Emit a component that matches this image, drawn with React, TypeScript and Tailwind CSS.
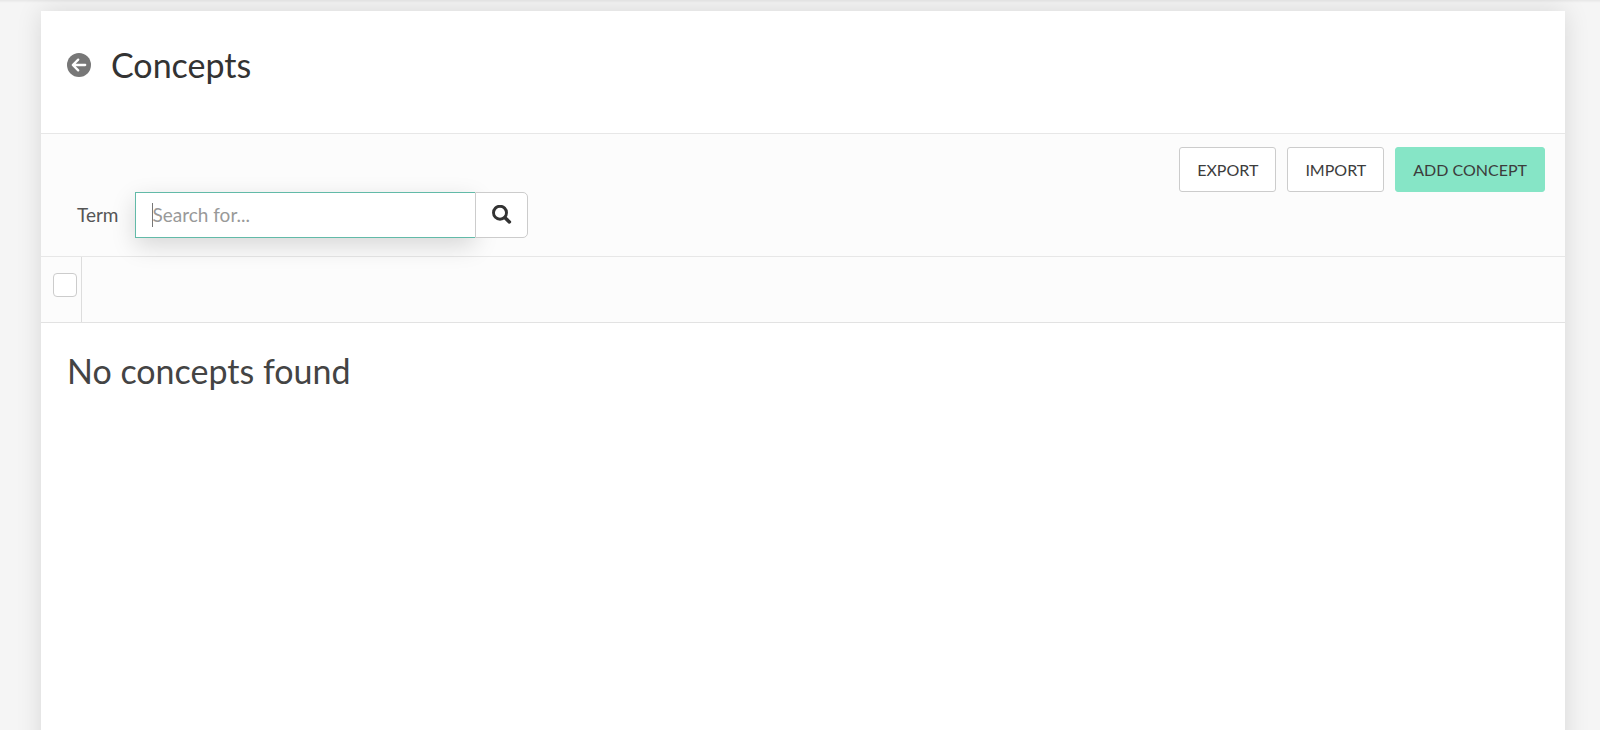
import { useState } from 'react';
import type { ReactNode } from 'react';

function BackIcon() {
  return (
    <svg viewBox="0 0 24 24" className="h-6 w-6" aria-hidden="true">
      <circle cx="12" cy="12" r="12" fill="#777777" />
      <path
        d="M18.2 12H6.2M11.2 6.6 5.8 12l5.4 5.4"
        fill="none"
        stroke="#ffffff"
        strokeWidth="2.3"
        strokeLinecap="round"
        strokeLinejoin="round"
      />
    </svg>
  );
}

function SearchIcon() {
  return (
    <svg viewBox="0 0 20 20" className="h-5 w-5" aria-hidden="true">
      <circle cx="8" cy="7.7" r="6.5" fill="none" stroke="#333333" strokeWidth="2.9" />
      <path d="m13 12.7 4.4 4.2" stroke="#333333" strokeWidth="3.5" strokeLinecap="round" />
    </svg>
  );
}

function ActionButton({ primary = false, children }: { primary?: boolean; children: ReactNode }) {
  return (
    <button
      type="button"
      className={`h-[45px] rounded-[3px] border px-[17px] text-[16px] leading-6 uppercase text-[#3c3c3c] ${
        primary ? 'border-[#86e5c6] bg-[#86e5c6]' : 'border-[#cccccc] bg-white'
      }`}
    >
      {children}
    </button>
  );
}

export default function App() {
  const [term, setTerm] = useState('');

  return (
    <div className="flex min-h-screen flex-col overflow-hidden bg-[#f5f5f5] pt-[11px] pr-[35px] pl-[41px] font-['Lato',sans-serif] text-[#333333] shadow-[inset_0_4px_3px_-3px_rgba(0,0,0,0.08)]">
      <main className="-mb-10 flex-1 bg-white shadow-[0_0_24px_rgba(0,0,0,0.12)]">
        <header className="flex h-[123px] items-start gap-5 border-b border-[#e7e7e7] px-[26px] pt-[30px]">
          <a href="#back" aria-label="Back" className="mt-3">
            <BackIcon />
          </a>
          <h1 className="text-[34px] leading-[48px]">Concepts</h1>
        </header>

        <section className="border-b border-[#e7e7e7] bg-[#fcfcfc] pt-[13px] pr-5 pb-[18px] pl-9">
          <div className="flex justify-end gap-[11px]">
            <ActionButton>Export</ActionButton>
            <ActionButton>Import</ActionButton>
            <ActionButton primary>Add concept</ActionButton>
          </div>
          <form className="flex items-center" onSubmit={(e) => e.preventDefault()}>
            <label htmlFor="term" className="mr-[17px] text-[19px] leading-6 text-[#555555]">
              Term
            </label>
            <div className="relative">
              <input
                id="term"
                type="text"
                value={term}
                onChange={(e) => setTerm(e.target.value)}
                placeholder="Search for..."
                className="block h-[46px] w-[340px] border border-r-0 border-[#62baa8] bg-white px-4 pb-[2px] text-[19px] text-[#555555] shadow-[0_8px_24px_rgba(0,0,0,0.15)] outline-none placeholder:text-[#999999]"
              />
              <span className="pointer-events-none absolute top-[11px] left-[17px] h-6 w-px bg-[#777777]" />
            </div>
            <button
              type="submit"
              aria-label="Search"
              className="relative flex h-[46px] w-[53px] items-center justify-center rounded-r-[5px] border border-[#cccccc] bg-white"
            >
              <SearchIcon />
            </button>
          </form>
        </section>

        <div className="flex h-[66px] border-b border-[#e2e2e2] bg-[#fcfcfc]">
          <div className="w-[41px] border-r border-[#dddddd] pt-4 pl-3">
            <input
              type="checkbox"
              aria-label="Select all concepts"
              className="block h-6 w-6 appearance-none rounded-[4px] border border-[#cccccc] bg-white checked:bg-[#86e5c6]"
            />
          </div>
        </div>

        <h2 className="px-[26px] pt-6 text-[34px] leading-[48px] text-[#444444]">No concepts found</h2>
      </main>
    </div>
  );
}
